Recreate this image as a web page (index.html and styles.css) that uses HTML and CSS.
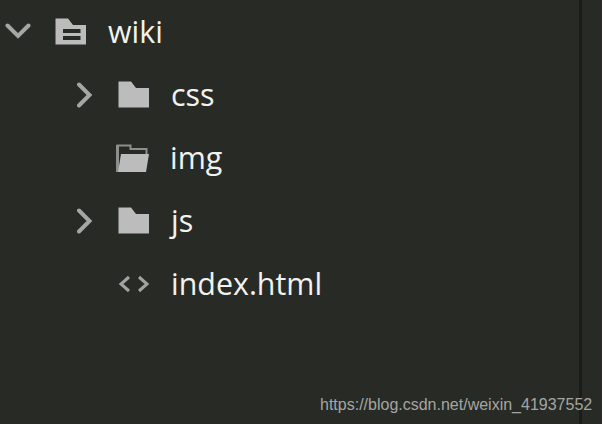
FILE: index.html
```html
<!DOCTYPE html>
<html lang="en">
    <head>
        <meta charset="UTF-8">
        <title>wiki</title>
        <link rel="stylesheet" href="styles.css">
    </head>
    <body>
        <div class="sidebar">
            <div class="row">
                <svg class="arrow-down" width="26" height="18" viewBox="0 0 26 18"><path d="M2.500 2.500L13 13L23.500 2.500" fill="none" stroke="#a6a6a4" stroke-width="4" stroke-linecap="round"/></svg>
                <svg class="icon" width="32" height="27" viewBox="0 0 32 27"><path fill-rule="evenodd" d="M0.500 0.500H13L18 7H31V26.500H0.500ZM8 11V15H25.500V11ZM8 18V22H25.500V18Z" fill="#bcbcbc"/></svg>
                <span class="name">wiki</span>
            </div>
            <div class="row child">
                <svg class="arrow-right" width="18" height="26" viewBox="0 0 18 26"><path d="M2 2.500L12.500 13L2 23.500" fill="none" stroke="#a6a6a4" stroke-width="4" stroke-linecap="round"/></svg>
                <svg class="icon" width="32" height="27" viewBox="0 0 32 27"><path d="M0.500 0.500H13L18 7H31V26.500H0.500Z" fill="#bcbcbc"/></svg>
                <span class="name">css</span>
            </div>
            <div class="row child">
                <span class="arrow-space"></span>
                <svg class="icon icon-open" width="33" height="28" viewBox="0 0 33 28"><path d="M1.500 27V1.500H14.500V5H30.500V10" fill="none" stroke="#8e8e8c" stroke-width="2"/><path d="M0 1V28H3V1Z" fill="#8e8e8c"/><path d="M5 10H33L30 28H2Z" fill="#bcbcbc"/></svg>
                <span class="name">img</span>
            </div>
            <div class="row child">
                <svg class="arrow-right" width="18" height="26" viewBox="0 0 18 26"><path d="M2 2.500L12.500 13L2 23.500" fill="none" stroke="#a6a6a4" stroke-width="4" stroke-linecap="round"/></svg>
                <svg class="icon" width="32" height="27" viewBox="0 0 32 27"><path d="M0.500 0.500H13L18 7H31V26.500H0.500Z" fill="#bcbcbc"/></svg>
                <span class="name">js</span>
            </div>
            <div class="row child">
                <span class="arrow-space"></span>
                <svg class="icon" width="32" height="18" viewBox="0 0 32 18"><path d="M11 2L3 9L11 16M21 2L29 9L21 16" fill="none" stroke="#a3a3a1" stroke-width="3"/></svg>
                <span class="name">index.html</span>
            </div>
        </div>
        <div class="watermark">https://blog.csdn.net/weixin_41937552</div>
    </body>
</html>
```

FILE: styles.css
```css
*{
    margin: 0;
    padding: 0;
    box-sizing: border-box;
}
body{
    height: 424px;
    overflow: hidden;
    background-color: #282a25;
}
.sidebar{
    width: 582px;
    height: 424px;
    border-right: 3px solid #1b1c19;
    padding-left: 5px;
}
.row{
    display: flex;
    align-items: center;
    height: 63px;
}
.child{
    padding-left: 72px;
}
.arrow-down{
    margin-right: 24px;
}
.arrow-right, .arrow-space{
    width: 18px;
    margin-right: 23px;
}
.icon{
    flex-shrink: 0;
}
.icon-open{
    margin-left: -2px;
}
.row .name{
    margin-left: 21px;
    font-family: "Open Sans", sans-serif;
    font-size: 30.4px;
    line-height: 40px;
    color: #f2f2f0;
}
.watermark{
    position: absolute;
    left: 320px;
    top: 395px;
    font-family: "Liberation Sans", sans-serif;
    font-size: 16px;
    line-height: 20px;
    color: #a5a6a2;
}
```
